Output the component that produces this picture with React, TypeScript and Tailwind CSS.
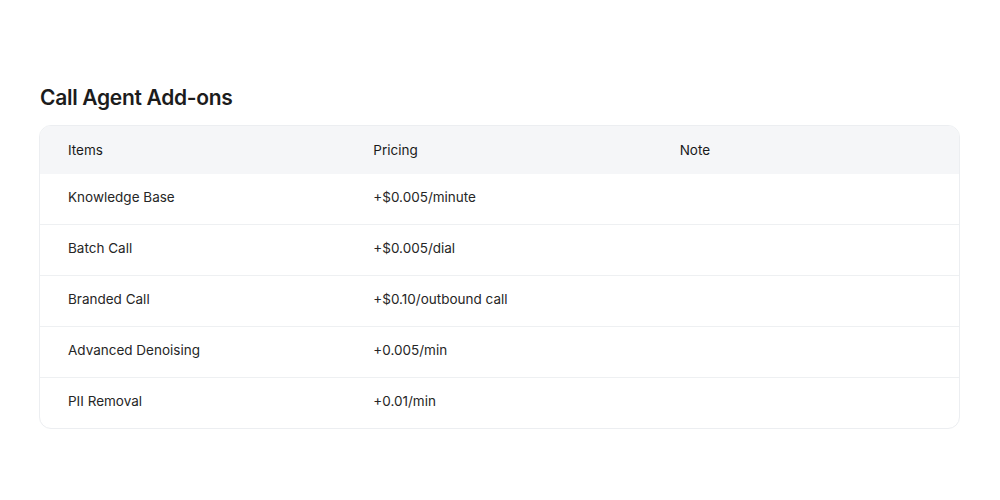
const rows = [
  { item: 'Knowledge Base', price: '+$0.005/minute', note: '' },
  { item: 'Batch Call', price: '+$0.005/dial', note: '' },
  { item: 'Branded Call', price: '+$0.10/outbound call', note: '' },
  { item: 'Advanced Denoising', price: '+0.005/min', note: '' },
  { item: 'PII Removal', price: '+0.01/min', note: '' },
]

export default function App() {
  return (
    <div className="min-h-screen w-full bg-white px-10 pt-[82px] font-['Inter',sans-serif] text-[#1f1f1f]">
      <h2 className="text-[21px] font-semibold leading-[32px] tracking-[-0.3px] text-[#1c1c1c]">Call Agent Add-ons</h2>

      <div className="ml-[-1px] mt-[11px] w-[921px] overflow-hidden rounded-xl border border-[#eceef1]">
        {/* Header */}
        <div className="grid h-[48px] grid-cols-3 items-center bg-[#f5f6f8] text-[13.5px] font-normal text-[#1a1a1a]">
          <div className="pl-7 pr-4">Items</div>
          <div className="pl-[27px] pr-4">Pricing</div>
          <div className="pl-[27px] pr-4">Note</div>
        </div>

        {rows.map((row, i) => (
          <div
            key={row.item}
            className={`grid grid-cols-3 items-center pb-[4px] text-[13.5px] text-[#262626] ${
              i > 0 ? 'h-[51px] border-t border-[#eef0f2]' : 'h-[50px]'
            }`}
          >
            <div className="pl-7 pr-4">{row.item}</div>
            <div className="pl-[27px] pr-4">{row.price}</div>
            <div className="pl-[27px] pr-4">{row.note}</div>
          </div>
        ))}
      </div>
    </div>
  )
}
